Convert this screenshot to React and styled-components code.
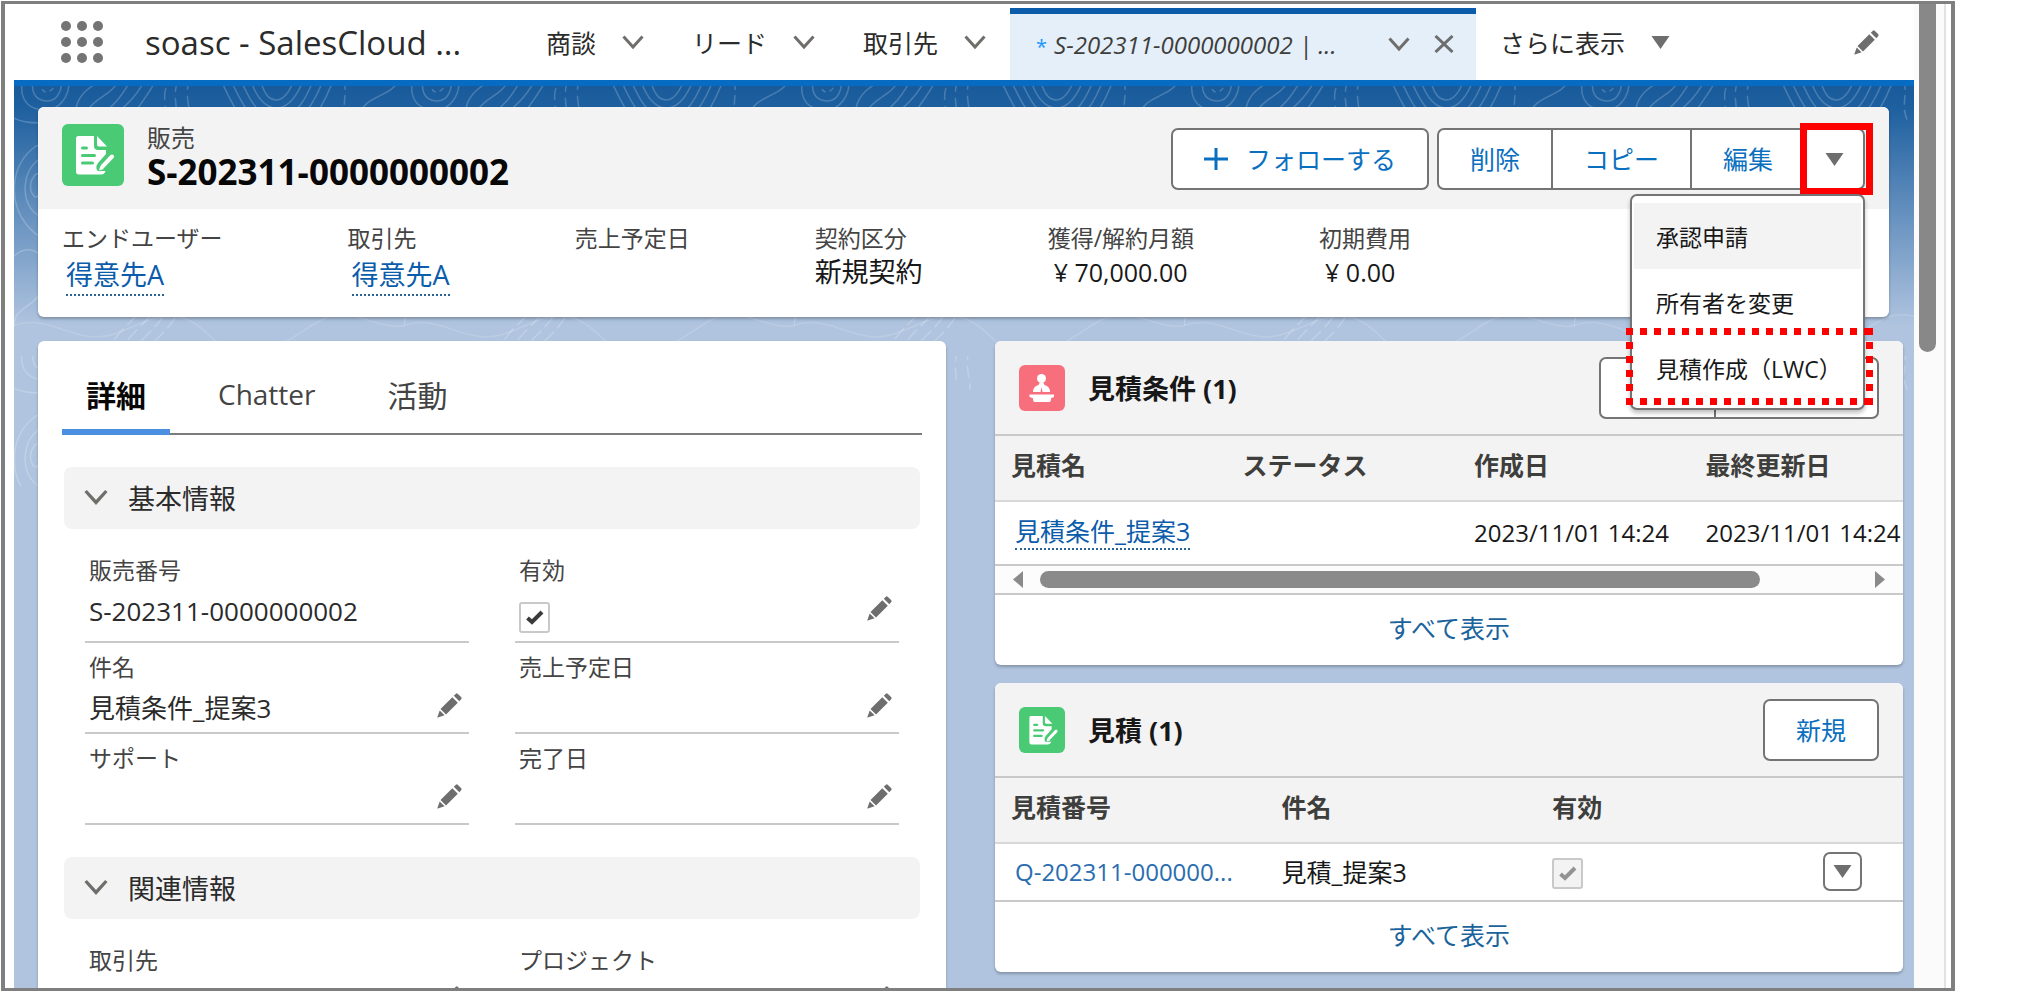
import React, { useState } from 'react';
import styled, { createGlobalStyle } from 'styled-components';

const GlobalStyle = createGlobalStyle`
  * {
    box-sizing: border-box;
  }

  body {
    margin: 0;
    background: white;
    color: #181818;
    font-family: 'Open Sans', 'Noto Sans CJK JP', sans-serif;
    font-size: 25px;
    overflow: hidden;
  }

  button {
    font-family: inherit;
    cursor: pointer;
  }
`;

// Window frame
const Frame = styled.div`
  display: flex;
  height: calc(100vh - 7px);
  margin: 1px 72px 6px 1px;
  padding: 0 5px 0 9px;
  border: 3px solid #7f7f7f;
  border-left-width: 4px;
  border-right-width: 4px;
  overflow: hidden;
`;

const Main = styled.main`
  flex: 1;
  min-width: 0;
  display: flex;
  flex-direction: column;
`;

const ScrollTrack = styled.div`
  width: 32px;
  padding-left: 5px;
  background: #fbfbfb;
  border-right: 2px solid #e2e2e2;
`;

const ScrollThumb = styled.div`
  width: 17px;
  height: 348px;
  background: #888;
  border-radius: 0 0 9px 9px;
`;

// Global navigation
const NavBar = styled.header`
  flex: none;
  display: flex;
  align-items: center;
  height: 82px;
  padding: 0 35px 0 47px;
  background: white;
  border-bottom: 6px solid #066bc3;
`;

const PlainButton = styled.button`
  display: inline-flex;
  padding: 0;
  border: none;
  background: none;
  color: #6e6e6e;
`;

const Waffle = styled(PlainButton)`
  display: grid;
  grid-template-columns: repeat(3, 10px);
  gap: 6px;

  span {
    width: 10px;
    height: 10px;
    border-radius: 50%;
    background: #747474;
  }
`;

const AppName = styled.span`
  width: 377px;
  margin-left: 42px;
  font-size: 33px;
  color: #2b2b2b;
  white-space: nowrap;
`;

const NavItem = styled.div`
  display: flex;
  align-items: center;
  gap: 26px;
  padding: 0 24px;
  white-space: nowrap;

  a {
    color: #2b2b2b;
    text-decoration: none;
  }
`;

const ActiveTab = styled.div`
  align-self: stretch;
  display: flex;
  align-items: center;
  gap: 24px;
  width: 466px;
  margin-top: 4px;
  padding: 0 22px 6px 26px;
  background: #e4eff9;
  border-top: 6px solid #0b5cab;
`;

const ActiveTabLink = styled.a`
  flex: 1;
  font-size: 24px;
  font-style: italic;
  color: #3e3e3c;
  text-decoration: none;
  white-space: nowrap;

  span {
    color: #1b96ff;
    font-size: 20px;
    font-style: normal;
    margin-right: 7px;
  }
`;

const NavEdit = styled(PlainButton)`
  margin-left: auto;
`;

// Page body
const Body = styled.div`
  position: relative;
  flex: 1;
  min-height: 0;
  padding: 21px 11px 0 24px;
  background: linear-gradient(#195a9a 0, #1d5f9f 20px, #b0c4df 240px);
`;

const Contours = styled.svg`
  position: absolute;
  top: 0;
  left: 0;
  width: 100%;
  height: 400px;
`;

const Card = styled.section`
  position: relative;
  background: white;
  border-radius: 6px;
  box-shadow: 0 2px 3px rgba(0, 0, 0, 0.25);
`;

const RecordCard = styled(Card)`
  z-index: 2;
  margin: 0 14px 24px 0;
`;

const RecordHeader = styled.div`
  display: flex;
  align-items: flex-start;
  height: 102px;
  padding: 17px 24px 0;
  background: #f3f3f3;
  border-radius: 6px 6px 0 0;
`;

const IconTile = styled.span`
  flex: none;
  display: inline-flex;
  width: ${(props) => props.$size}px;
  height: ${(props) => props.$size}px;
  border-radius: 6px;
  background: ${(props) => props.$color};

  svg {
    width: 100%;
    height: 100%;
  }
`;

const RecordTitle = styled.div`
  flex: 1;
  margin-left: 23px;
`;

const ObjectName = styled.div`
  font-size: 24px;
  line-height: 28px;
  color: #444;
`;

const RecordName = styled.h1`
  margin: 0;
  font-size: 35px;
  font-weight: 700;
  line-height: 40px;
  color: #080707;
`;

const RecordActions = styled.div`
  display: flex;
  padding-top: 4px;
`;

const ButtonGroup = styled.div`
  display: flex;
  margin-left: 8px;
`;

const Button = styled.button`
  display: inline-flex;
  align-items: center;
  justify-content: center;
  gap: 18px;
  height: 62px;
  min-width: ${(props) => props.$minWidth || 0}px;
  padding: 0 ${(props) => props.$pad || 31}px;
  border: 2px solid #747474;
  border-radius: 7px;
  background: white;
  color: #0b6fc0;
  font-size: 25px;
  line-height: 36px;
  white-space: nowrap;

  ${ButtonGroup} & {
    border-radius: 0;
    margin-left: -2px;
  }

  ${ButtonGroup} > &:first-child {
    margin-left: 0;
    border-radius: 7px 0 0 7px;
  }

  ${ButtonGroup} > &:last-child,
  ${ButtonGroup} > :last-child > & {
    border-radius: 0 7px 7px 0;
  }
`;

const MenuAnchor = styled.div`
  position: relative;
`;

const Highlight = styled.div`
  position: absolute;
  top: -5px;
  right: -8px;
  bottom: -5px;
  left: -6px;
  border: 7px solid #fe0000;
  pointer-events: none;
`;

const Menu = styled.ul`
  position: absolute;
  top: 66px;
  right: 0;
  width: 235px;
  margin: 0;
  padding: 7px 2px;
  list-style: none;
  background: white;
  border: 2px solid #747474;
  border-radius: 7px;
  box-shadow: 0 3px 4px rgba(0, 0, 0, 0.25);
`;

const MenuItem = styled.li`
  position: relative;

  button {
    display: block;
    width: 100%;
    height: 66px;
    padding: 0 22px;
    border: none;
    background: ${(props) => (props.$active ? '#f3f3f3' : 'transparent')};
    color: #181818;
    font-size: 23px;
    text-align: left;
    white-space: nowrap;
  }
`;

const dots = (direction) =>
  `repeating-linear-gradient(${direction}, #fe0000 0, #fe0000 7px, transparent 7px, transparent 14px)`;

const DottedHighlight = styled.div`
  position: absolute;
  top: -7px;
  right: -12px;
  bottom: -4px;
  left: -8px;
  pointer-events: none;
  background:
    ${dots('to right')} 0 0 / 100% 7px no-repeat,
    ${dots('to right')} 0 100% / 100% 7px no-repeat,
    ${dots('to bottom')} 0 0 / 7px 100% no-repeat,
    ${dots('to bottom')} 100% 0 / 7px 100% no-repeat;
`;

const DottedLink = styled.a`
  display: inline-block;
  margin-left: 4px;
  line-height: 34px;
  color: #0b5cab;
  text-decoration: none;
  border-bottom: 2px dotted #2a6496;
`;

const Summary = styled.dl`
  display: flex;
  gap: 125px;
  height: 108px;
  margin: 0;
  padding: 11px 24px;
  white-space: nowrap;
`;

const SummaryLabel = styled.dt`
  font-size: 23px;
  line-height: 36px;
  color: #444;
`;

const SummaryValue = styled.dd`
  margin: 0;
  padding-left: ${(props) => (props.$indent ? 6 : 0)}px;
  font-size: ${(props) => (props.$indent ? 25 : 27)}px;
  line-height: 32px;

  ${DottedLink} {
    line-height: 38px;
  }
`;

const Columns = styled.div`
  position: relative;
  display: grid;
  grid-template-columns: minmax(0, 1fr) minmax(0, 1fr);
  gap: 49px;
`;

// Detail panel
const DetailCard = styled(Card)`
  padding: 0 24px 48px;
`;

const TabList = styled.div`
  display: flex;
  gap: 24px;
  height: 94px;
  border-bottom: 2px solid #7c7c7c;
`;

const Tab = styled.button`
  height: 94px;
  padding: 18px 24px 0;
  border: none;
  border-bottom: 6px solid ${(props) => (props.$active ? '#4a8fe0' : 'transparent')};
  background: none;
  color: ${(props) => (props.$active ? '#080707' : '#444')};
  font-size: ${(props) => (props.$latin ? 28 : 30)}px;
  font-weight: ${(props) => (props.$active ? 700 : 400)};
`;

const SectionHeader = styled.button`
  display: flex;
  align-items: center;
  gap: 20px;
  width: calc(100% - 4px);
  height: 62px;
  margin: 32px 2px 17px;
  padding: 0 20px 2px;
  border: none;
  border-radius: 8px;
  background: #f3f3f3;
  color: #2b2b2b;
  font-size: 27px;
`;

const Fields = styled.div`
  display: grid;
  grid-template-columns: 1fr 1fr;
  column-gap: 46px;
  padding: 0 23px;
`;

const Field = styled.div`
  display: flex;
  flex-direction: column;
  padding: 7px 0 0 4px;
  border-bottom: 2px solid #c9c9c9;
`;

const FieldLabel = styled.label`
  font-size: 23px;
  line-height: 34px;
  color: #444;
`;

const FieldValue = styled.div`
  flex: 1;
  display: flex;
  align-items: flex-start;
  min-height: 48px;
  font-size: 26px;
  line-height: 48px;
  color: #2b2b2b;
`;

const FieldEdit = styled(PlainButton)`
  margin: 9px 7px 0 auto;
`;

const CheckWrap = styled.span`
  position: relative;
  display: inline-flex;
  margin: ${(props) => (props.$inField ? '15px 0 8px' : '0')};
  vertical-align: middle;

  svg {
    position: absolute;
    top: 8px;
    left: 7px;
    color: ${(props) => (props.$muted ? '#939393' : '#3a3a3a')};
    pointer-events: none;
  }
`;

const CheckInput = styled.input`
  appearance: none;
  width: 31px;
  height: 31px;
  margin: 0;
  border: 2px solid #c9c9c9;
  border-radius: 3px;
  background: ${(props) => (props.disabled ? '#f3f3f3' : 'white')};
`;

// Related lists
const RelatedColumn = styled.div`
  display: flex;
  flex-direction: column;
  gap: 18px;
`;

const RelatedCard = styled(Card)`
  overflow: hidden;
`;

const RelatedHeader = styled.div`
  display: flex;
  align-items: center;
  height: 93px;
  padding: 0 24px;
  background: #f3f3f3;

  h2 {
    flex: 1;
    margin: 0 0 0 23px;
    font-size: 27px;
    font-weight: 700;
    color: #181818;
  }
`;

const Table = styled.table`
  width: 100%;
  table-layout: fixed;
  border-collapse: collapse;
  font-size: 25px;

  th {
    width: ${(props) => props.$column};
    height: 66px;
    padding: 0 0 8px 16px;
    background: #f3f3f3;
    border-top: 2px solid #c9c9c9;
    border-bottom: 2px solid #d8d8d8;
    color: #3e3e3c;
    text-align: left;
    white-space: nowrap;
  }

  th:last-child {
    width: auto;
  }

  td {
    height: ${(props) => props.$rowHeight}px;
    padding: 0 0 2px 16px;
    border-bottom: 2px solid #c9c9c9;
    white-space: nowrap;
  }
`;

const DateText = styled.span`
  font-size: 24px;
`;

const EllipsisLink = styled.a`
  margin-left: 4px;
  font-size: 24px;
  color: #2a6db0;
  text-decoration: none;
`;

const RowMenuButton = styled(PlainButton)`
  align-items: center;
  justify-content: center;
  width: 39px;
  height: 39px;
  border: 2px solid #747474;
  border-radius: 7px;
  background: white;
  vertical-align: middle;
`;

const RightCell = styled.td`
  && {
    padding-right: 44px;
    text-align: right;
  }
`;

const HorizontalScroll = styled.div`
  display: flex;
  align-items: center;
  height: 29px;
  padding: 0 18px;
  background: #fcfcfc;
  border-bottom: 2px solid #c9c9c9;
  color: #8a8a8a;
`;

const HorizontalTrack = styled.div`
  flex: 1;
  margin: 0 17px;
`;

const HorizontalThumb = styled.div`
  width: 88%;
  height: 17px;
  border-radius: 9px;
  background: #8a8a8a;
`;

const ViewAll = styled.a`
  display: block;
  height: 70px;
  line-height: 66px;
  color: #1b639c;
  text-align: center;
  text-decoration: none;
`;

const Chevron = ({ size = 22 }) => (
  <svg width={size} height={size} viewBox="0 0 22 22" fill="none" stroke="#706e6b" strokeWidth="3" aria-hidden="true">
    <path d="M1.5 5.5 11 16 20.5 5.5" />
  </svg>
);

const Triangle = () => (
  <svg width="19" height="13" viewBox="0 0 19 13" fill="#6e6e6e" aria-hidden="true">
    <path d="M.5 0h18L9.5 13z" />
  </svg>
);

const Cross = () => (
  <svg width="20" height="18" viewBox="0 0 20 18" fill="none" stroke="#6e6e6e" strokeWidth="3" aria-hidden="true">
    <path d="M1.5 1 18.5 17M18.5 1 1.5 17" />
  </svg>
);

const Plus = () => (
  <svg width="24" height="24" viewBox="0 0 24 24" fill="none" stroke="#0b6fc0" strokeWidth="3" aria-hidden="true">
    <path d="M12 1v22M0 12h24" />
  </svg>
);

const Pencil = () => (
  <svg width="25" height="25" viewBox="0 0 25 25" fill="#6e6e6e" aria-hidden="true">
    <path d="M15.3 4.2 20.8 9.7 9 21.5 3.5 16zM2.7 17.4 7.6 22.3.8 24.6Q.2 24.7.4 24.1zM16.8 2.7 18.9.7Q19.8 0 20.7.7L24.3 4.3Q25 5.2 24.3 6.1L22.3 8.2z" />
  </svg>
);

const Check = () => (
  <svg width="18" height="15" viewBox="0 0 18 15" fill="none" stroke="currentColor" strokeWidth="4" aria-hidden="true">
    <path d="M1.5 8 6 12 16 2" />
  </svg>
);

const ContractIcon = () => (
  <svg viewBox="0 0 62 62" aria-hidden="true">
    <path
      fill="white"
      d="M16 12h16v10q0 4 4 4h8v4L36 39q-2.500 3-1.500 6t4 2h5q-1 3.500-4.500 3.500H17q-3 0-3-3V14.500q0-2.500 2-2.500z"
    />
    <path fill="white" d="M35 12 45 22.5H37q-2 0-2-2z" />
    <path d="M20.500 24h4M20.500 31.500h12M20.500 39h10" stroke="#4bca76" strokeWidth="3" strokeLinecap="round" />
    <path d="M50 32.500 41 42" stroke="white" strokeWidth="4" strokeLinecap="round" />
    <path d="M38.500 41.500 42 45 37 46.500z" fill="white" />
  </svg>
);

const PodiumIcon = () => (
  <svg viewBox="0 0 46 46" fill="white" aria-hidden="true">
    <circle cx="22.5" cy="13.500" r="4.500" />
    <path d="M14 27q0-5.500 5.500-7l1-2h4l1 2q5.500 1.500 5.500 7h-7.500l-1-5-1 5z" />
    <path d="M10.500 29.500h24.500v2.500l-3 1.200V35q0 2-2 2h-14Q14 37 14 35v-1.800L10.500 32z" />
  </svg>
);

const ContourLines = () => (
  <Contours aria-hidden="true">
    <defs>
      <pattern id="contours" width="390" height="270" patternUnits="userSpaceOnUse">
        <g fill="none" stroke="white" strokeOpacity=".2" strokeWidth="1.5">
          <path d="M10-10C4 8 10 22 28 24S58 8 54-10M20-10C16 4 20 14 32 15S50 2 46-10" />
          <path d="M27-6C26 4 30 8 36 5S40-6 38-10" strokeDasharray="5 4" />
          <path d="M62 22C66 4 82-2 94-10M72 26C84 8 96 12 106-8M88 28C100 20 108 10 118-8M100 30C116 16 124 8 132-8M118 30C130 14 136 6 142-6" />
          <path d="M152 2C148 10 154 22 150 32M164-6C158 10 164 20 162 30M176-8C170 8 176 20 176 34" strokeDasharray="12 6" />
          <path d="M246-8C250 10 256 14 262 14S276 8 280-8M236-8C242 12 252 22 262 22S282 14 290-8M226-8C236 16 246 32 262 32S290 20 300-8M216-8C230 24 242 42 262 42S298 24 310-8M206-8C222 28 236 52 262 52S306 30 320-8" />
          <path d="M330-6C334 12 326 18 334 36" strokeDasharray="10 5" />
          <path d="M346 28C352 8 378 12 386-8M-8 26C0 36 20 40 46 34S66 20 80 40" />
          <path d="M22 60C-6 80-4 118 12 138S44 160 40 112 44 52 22 60M24 74C8 86 8 112 18 124S34 128 32 104 34 70 24 74M22 88C14 96 16 106 20 110S26 106 26 100 26 86 22 88" />
          <path d="M0 170C20 152 40 176 30 200S0 220 0 240M380 60C360 90 384 120 372 150S346 190 366 220M368 50C344 86 372 120 358 146S334 196 352 230" />
          <path d="M-10 244C30 220 60 262 100 248S160 214 196 250 260 264 300 238 360 250 400 238" strokeOpacity=".14" />
          <path d="M92 270C100 246 120 236 130 220M104 270C112 250 130 240 142 222M116 270C124 254 142 244 152 226M128 270C136 256 150 250 162 230" strokeDasharray="14 5" />
        </g>
      </pattern>
    </defs>
    <rect width="100%" height="100%" fill="url(#contours)" />
  </Contours>
);

const NAV_ITEMS = ['商談', 'リード', '取引先'];

const SUMMARY = [
  { label: 'エンドユーザー', value: '得意先A', link: true },
  { label: '取引先', value: '得意先A', link: true },
  { label: '売上予定日' },
  { label: '契約区分', value: '新規契約' },
  { label: '獲得/解約月額', value: '¥ 70,000.00', currency: true },
  { label: '初期費用', value: '¥ 0.00', currency: true },
];

const BASIC_FIELDS = [
  { id: 'number', label: '販売番号', value: 'S-202311-0000000002', readOnly: true },
  { id: 'active', label: '有効', checkbox: true },
  { id: 'subject', label: '件名', value: '見積条件_提案3' },
  { id: 'expected', label: '売上予定日' },
  { id: 'support', label: 'サポート' },
  { id: 'completed', label: '完了日' },
];

const RELATED_FIELDS = [
  { id: 'account', label: '取引先' },
  { id: 'project', label: 'プロジェクト' },
];

const Checkbox = ({ inField, disabled, ...rest }) => (
  <CheckWrap $inField={inField} $muted={disabled}>
    <CheckInput type="checkbox" defaultChecked disabled={disabled} {...rest} />
    <Check />
  </CheckWrap>
);

const FieldList = ({ fields }) => (
  <Fields>
    {fields.map((field) => (
      <Field key={field.id}>
        <FieldLabel as={field.checkbox ? 'label' : 'span'} htmlFor={field.checkbox ? field.id : undefined}>
          {field.label}
        </FieldLabel>
        <FieldValue>
          {field.checkbox ? <Checkbox id={field.id} inField /> : field.value}
          {!field.readOnly && (
            <FieldEdit type="button" aria-label={`${field.label}を編集`}>
              <Pencil />
            </FieldEdit>
          )}
        </FieldValue>
      </Field>
    ))}
  </Fields>
);

const App = () => {
  const [menuOpen, setMenuOpen] = useState(true);
  const [activeTab, setActiveTab] = useState('詳細');

  return (
    <>
      <GlobalStyle />
      <Frame>
        <Main>
          <NavBar>
            <Waffle type="button" aria-label="アプリケーションランチャー">
              {Array.from({ length: 9 }, (_, i) => (
                <span key={i} />
              ))}
            </Waffle>
            <AppName>soasc - SalesCloud ...</AppName>
            {NAV_ITEMS.map((item) => (
              <NavItem key={item}>
                <a href="#nav">{item}</a>
                <PlainButton type="button" aria-label={`${item}リスト`}>
                  <Chevron />
                </PlainButton>
              </NavItem>
            ))}
            <ActiveTab>
              <ActiveTabLink href="#record">
                <span>*</span>S-202311-0000000002 | ...
              </ActiveTabLink>
              <PlainButton type="button" aria-label="タブメニュー">
                <Chevron />
              </PlainButton>
              <PlainButton type="button" aria-label="タブを閉じる">
                <Cross />
              </PlainButton>
            </ActiveTab>
            <NavItem>
              <a href="#more">さらに表示</a>
              <Triangle />
            </NavItem>
            <NavEdit type="button" aria-label="ナビゲーションを編集">
              <Pencil />
            </NavEdit>
          </NavBar>

          <Body>
            <ContourLines />

            <RecordCard>
              <RecordHeader>
                <IconTile $size={62} $color="#4bca76">
                  <ContractIcon />
                </IconTile>
                <RecordTitle>
                  <ObjectName>販売</ObjectName>
                  <RecordName>S-202311-0000000002</RecordName>
                </RecordTitle>
                <RecordActions>
                  <Button type="button">
                    <Plus />
                    フォローする
                  </Button>
                  <ButtonGroup>
                    <Button type="button">削除</Button>
                    <Button type="button">コピー</Button>
                    <Button type="button">編集</Button>
                    <MenuAnchor>
                      <Button
                        type="button"
                        $pad={19}
                        aria-label="その他のアクション"
                        aria-expanded={menuOpen}
                        onClick={() => setMenuOpen(!menuOpen)}
                      >
                        <Triangle />
                      </Button>
                      <Highlight />
                      {menuOpen && (
                        <Menu>
                          <MenuItem $active>
                            <button type="button">承認申請</button>
                          </MenuItem>
                          <MenuItem>
                            <button type="button">所有者を変更</button>
                          </MenuItem>
                          <MenuItem>
                            <button type="button">見積作成（LWC）</button>
                            <DottedHighlight />
                          </MenuItem>
                        </Menu>
                      )}
                    </MenuAnchor>
                  </ButtonGroup>
                </RecordActions>
              </RecordHeader>
              <Summary>
                {SUMMARY.map((item) => (
                  <div key={item.label}>
                    <SummaryLabel>{item.label}</SummaryLabel>
                    <SummaryValue $indent={item.currency}>
                      {item.link ? <DottedLink href="#account">{item.value}</DottedLink> : item.value}
                    </SummaryValue>
                  </div>
                ))}
              </Summary>
            </RecordCard>

            <Columns>
              <DetailCard>
                <TabList role="tablist">
                  {['詳細', 'Chatter', '活動'].map((tab) => (
                    <Tab
                      key={tab}
                      type="button"
                      role="tab"
                      aria-selected={activeTab === tab}
                      $active={activeTab === tab}
                      $latin={tab === 'Chatter'}
                      onClick={() => setActiveTab(tab)}
                    >
                      {tab}
                    </Tab>
                  ))}
                </TabList>
                <SectionHeader type="button">
                  <Chevron size={24} />
                  基本情報
                </SectionHeader>
                <FieldList fields={BASIC_FIELDS} />
                <SectionHeader type="button">
                  <Chevron size={24} />
                  関連情報
                </SectionHeader>
                <FieldList fields={RELATED_FIELDS} />
              </DetailCard>

              <RelatedColumn>
                <RelatedCard>
                  <RelatedHeader>
                    <IconTile $size={46} $color="#f76e7c">
                      <PodiumIcon />
                    </IconTile>
                    <h2>見積条件 (1)</h2>
                    <ButtonGroup>
                      <Button type="button" $minWidth={117} aria-label="新規" />
                      <Button type="button" $minWidth={165} aria-label="見積を追加" />
                    </ButtonGroup>
                  </RelatedHeader>
                  <Table $column="25.5%" $rowHeight={64}>
                    <thead>
                      <tr>
                        <th>見積名</th>
                        <th>ステータス</th>
                        <th>作成日</th>
                        <th>最終更新日</th>
                      </tr>
                    </thead>
                    <tbody>
                      <tr>
                        <td>
                          <DottedLink href="#quote-condition">見積条件_提案3</DottedLink>
                        </td>
                        <td />
                        <td>
                          <DateText>2023/11/01 14:24</DateText>
                        </td>
                        <td>
                          <DateText>2023/11/01 14:24</DateText>
                        </td>
                      </tr>
                    </tbody>
                  </Table>
                  <HorizontalScroll>
                    <svg width="10" height="17" viewBox="0 0 10 17" fill="currentColor" aria-hidden="true">
                      <path d="M10 0v17L0 8.5z" />
                    </svg>
                    <HorizontalTrack>
                      <HorizontalThumb />
                    </HorizontalTrack>
                    <svg width="10" height="17" viewBox="0 0 10 17" fill="currentColor" aria-hidden="true">
                      <path d="M0 0v17L10 8.5z" />
                    </svg>
                  </HorizontalScroll>
                  <ViewAll href="#all-conditions">すべて表示</ViewAll>
                </RelatedCard>

                <RelatedCard>
                  <RelatedHeader>
                    <IconTile $size={46} $color="#4bca76">
                      <ContractIcon />
                    </IconTile>
                    <h2>見積 (1)</h2>
                    <Button type="button">新規</Button>
                  </RelatedHeader>
                  <Table $column="29.8%" $rowHeight={58}>
                    <thead>
                      <tr>
                        <th>見積番号</th>
                        <th>件名</th>
                        <th>有効</th>
                        <th aria-label="アクション" />
                      </tr>
                    </thead>
                    <tbody>
                      <tr>
                        <td>
                          <EllipsisLink href="#quote">Q-202311-000000...</EllipsisLink>
                        </td>
                        <td>見積_提案3</td>
                        <td>
                          <Checkbox disabled aria-label="有効" />
                        </td>
                        <RightCell>
                          <RowMenuButton type="button" aria-label="行のアクション">
                            <Triangle />
                          </RowMenuButton>
                        </RightCell>
                      </tr>
                    </tbody>
                  </Table>
                  <ViewAll href="#all-quotes">すべて表示</ViewAll>
                </RelatedCard>
              </RelatedColumn>
            </Columns>
          </Body>
        </Main>
        <ScrollTrack>
          <ScrollThumb />
        </ScrollTrack>
      </Frame>
    </>
  );
};

export default App;
